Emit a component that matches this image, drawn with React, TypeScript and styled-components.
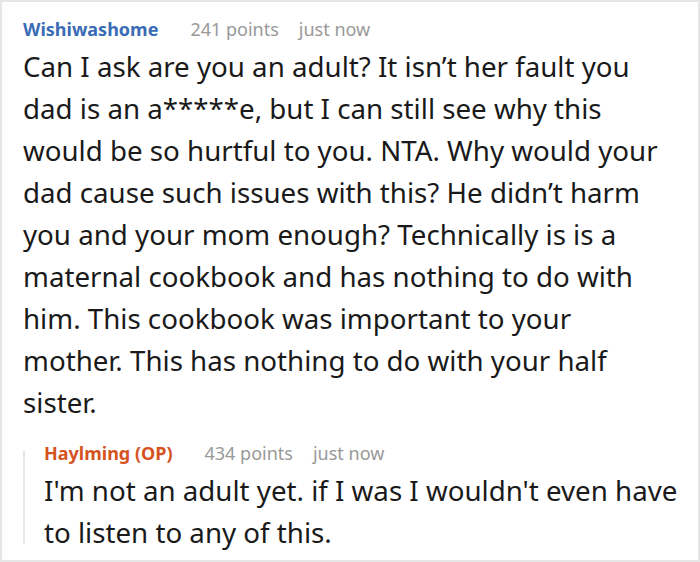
import React from "react";
import styled, { createGlobalStyle } from "styled-components";

const Global = createGlobalStyle`
  html, body { margin: 0; padding: 0; background: #fff; }
  body { font-family: "Noto Sans", "Open Sans", sans-serif; }
`;

const Frame = styled.div`
  box-sizing: border-box;
  width: 700px;
  height: 562px;
  border: 2px solid #e6e6e6;
  padding: 15px 8px 0 21px;
  overflow: hidden;
`;

const Header = styled.div`
  display: flex;
  align-items: baseline;
  font-size: 18px;
  line-height: 24px;
`;

const Author = styled.span<{ $op?: boolean }>`
  font-weight: 700;
  color: ${(p) => (p.$op ? "#d4531f" : "#3a6bb5")};
  margin-right: 32px;
`;

const Meta = styled.span`
  color: #999;
  margin-right: 20px;
`;

const Body = styled.p<{ $narrow?: boolean }>`
  margin: 4px ${(p) => (p.$narrow ? "26px" : "0")} 0 0;
  font-size: 27.7px;
  line-height: 42px;
  color: #1a1a1a;
`;

const Reply = styled.div`
  position: relative;
  margin-top: 18px;
  padding-left: 21px;

  &::before {
    content: "";
    position: absolute;
    left: 0;
    top: 10px;
    bottom: 9px;
    width: 2px;
    background: #e6e6e6;
  }
`;

export default function App() {
  return (
    <>
      <Global />
      <Frame>
        <Header>
          <Author>Wishiwashome</Author>
          <Meta>241 points</Meta>
          <Meta>just now</Meta>
        </Header>
        <Body $narrow>
          Can I ask are you an adult? It isn’t her fault you dad is an a*****e, but I can still see why this would be so hurtful to you. NTA. Why would your dad cause such issues with this? He didn’t harm you and your mom enough? Technically is is a maternal cookbook and has nothing to do with him. This cookbook was important to your mother. This has nothing to do with your half sister.
        </Body>
        <Reply>
          <Header>
            <Author $op>Haylming (OP)</Author>
            <Meta>434 points</Meta>
            <Meta>just now</Meta>
          </Header>
          <Body>
            I'm not an adult yet. if I was I wouldn't even have to listen to any of this.
          </Body>
        </Reply>
      </Frame>
    </>
  );
}
